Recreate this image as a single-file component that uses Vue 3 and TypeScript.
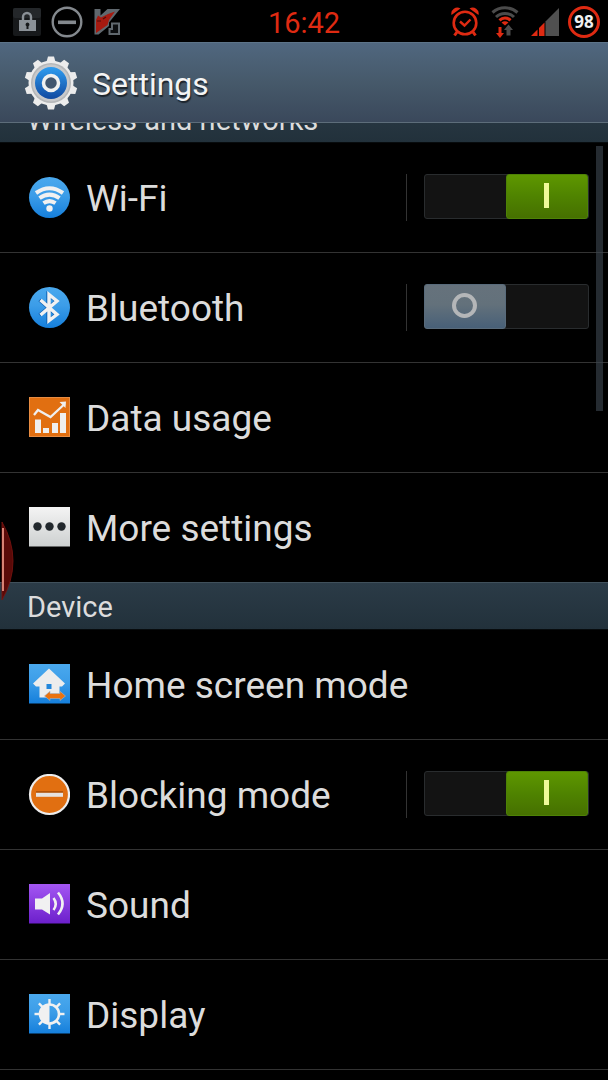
<script setup lang="ts">
import { reactive } from 'vue'

type IconName = 'wifi' | 'bluetooth' | 'data' | 'more' | 'home' | 'blocking' | 'sound' | 'display'

interface Item {
  id: IconName
  label: string
  on?: boolean
}

interface Section {
  title: string
  items: Item[]
}

const sections = reactive<Section[]>([
  {
    title: 'Wireless and networks',
    items: [
      { id: 'wifi', label: 'Wi-Fi', on: true },
      { id: 'bluetooth', label: 'Bluetooth', on: false },
      { id: 'data', label: 'Data usage' },
      { id: 'more', label: 'More settings' },
    ],
  },
  {
    title: 'Device',
    items: [
      { id: 'home', label: 'Home screen mode' },
      { id: 'blocking', label: 'Blocking mode', on: true },
      { id: 'sound', label: 'Sound' },
      { id: 'display', label: 'Display' },
    ],
  },
])

const teeth = Array.from({ length: 10 }, (_, i) => i * 36)
const rays = Array.from({ length: 8 }, (_, i) => i * 45)
</script>

<template>
  <div class="screen">
    <svg class="defs" width="0" height="0" aria-hidden="true">
      <defs>
        <linearGradient id="blue" x1="0" y1="0" x2="0" y2="1">
          <stop offset="0" stop-color="#4aa9ee" />
          <stop offset="0.45" stop-color="#3c9de8" />
          <stop offset="1" stop-color="#157fdc" />
        </linearGradient>
        <linearGradient id="purple" x1="0" y1="0" x2="0" y2="1">
          <stop offset="0" stop-color="#a457f3" />
          <stop offset="1" stop-color="#6c1fcb" />
        </linearGradient>
        <linearGradient id="silver" x1="0" y1="0" x2="0" y2="1">
          <stop offset="0" stop-color="#f4f4f4" />
          <stop offset="1" stop-color="#cdd0d0" />
        </linearGradient>
        <linearGradient id="hub" x1="0" y1="0" x2="0" y2="1">
          <stop offset="0" stop-color="#2f9df0" />
          <stop offset="1" stop-color="#1149a0" />
        </linearGradient>
      </defs>
    </svg>

    <header class="status">
      <div class="status-left">
        <svg width="28" height="28" viewBox="0 0 28 28" aria-hidden="true">
          <rect width="28" height="28" rx="2" fill="#17191b" />
          <rect width="28" height="10" rx="2" fill="#24272a" />
          <path d="M10 13V9a4 4 0 0 1 8 0v4" fill="none" stroke="#8b9197" stroke-width="2.4" />
          <rect x="6" y="12" width="17" height="11" fill="#8b9197" />
          <path d="M14.500 14.500a2 2 0 0 1 1 3.700V21h-2v-2.800a2 2 0 0 1 1-3.700z" fill="#17191b" />
        </svg>
        <svg width="32" height="32" viewBox="0 0 32 32" aria-hidden="true">
          <circle cx="16" cy="16" r="14.300" fill="none" stroke="#84898e" stroke-width="2.400" />
          <rect x="7" y="14.500" width="18" height="3.600" fill="#84898e" />
        </svg>
        <svg width="28" height="28" viewBox="0 0 28 28" aria-hidden="true">
          <path d="M1.500 1H7.500V7.500L14.500 1H27L16 14.500V18L5.500 26.500H1.500z" fill="#60686e" />
          <path d="M3 12L5 7.500L8 9.500L15 6L22 3.500L16 12L14.500 17L8 21.500L3 25z" fill="#a61a10" />
          <path d="M4 13h4M10 11l3-2" stroke="#4d0c08" stroke-width="1.200" />
          <path d="M19 15.500h7V26H16.500v-5h2.500z" fill="#0c0e10" stroke="#60686e" stroke-width="2" />
        </svg>
      </div>
      <time class="clock">16:42</time>
      <div class="status-right">
        <svg class="spaced" width="28" height="30" viewBox="0 0 28 30" aria-hidden="true">
          <g fill="none" stroke="#df2a12">
            <circle cx="14" cy="16" r="11.300" stroke-width="2.600" />
            <path d="M9 14.500l4.500 4 6-6" stroke-width="2.400" />
            <path d="M6 25l-2.500 3.500M22 25l2.500 3.500" stroke-width="3" />
          </g>
          <path d="M0.500 8a6 6 0 0 1 9-6.500zM27.500 8a6 6 0 0 0-9-6.500z" fill="#df2a12" />
        </svg>
        <svg class="spaced" width="28" height="32" viewBox="0 0 28 32" aria-hidden="true">
          <g fill="none" stroke-width="3">
            <path d="M1.500 6.500a19 19 0 0 1 25 0" stroke="#4b4b4b" />
            <path d="M5 11a13 13 0 0 1 18 0" stroke="#4b4b4b" />
            <path d="M8.500 14.300a8 8 0 0 1 11 0" stroke="#df2a12" />
          </g>
          <path d="M10.500 16.500a6 6 0 0 1 7 0L14 19.500z" fill="#df2a12" />
          <path d="M7.500 21h3v6h2.500l-4 5-4-5h2.500z" fill="#df2a12" />
          <path d="M17.500 18.500l4.500 5.500h-2.500V29.500h-4v-5.500H13z" fill="#4b4b4b" />
        </svg>
        <svg width="28" height="28" viewBox="0 0 28 28" aria-hidden="true">
          <path d="M0 28L6.500 21.500V28z" fill="#df2a12" />
          <path d="M8 28V20L13.500 14.500V28z" fill="#df2a12" />
          <path d="M14.500 28V13.500L28 0V28z" fill="#505050" />
        </svg>
        <span class="battery">98</span>
      </div>
    </header>

    <div class="title-bar">
      <svg width="54" height="54" viewBox="0 0 54 54" aria-hidden="true">
        <g fill="#ececec">
          <path v-for="a in teeth" :key="a" d="M22.500 6L24 0.500H30L31.500 6z" :transform="`rotate(${a} 27 27)`" />
          <circle cx="27" cy="27" r="22.500" />
        </g>
        <circle cx="27" cy="27" r="20" fill="#b5b7b9" />
        <circle cx="27" cy="27" r="18.500" fill="#c8c9cb" />
        <circle cx="27" cy="27" r="16" fill="url(#hub)" />
        <circle cx="27" cy="27" r="7.500" fill="#41556e" stroke="#f0f0f0" stroke-width="3.500" />
      </svg>
      <h1>Settings</h1>
    </div>

    <main class="viewport">
      <div class="list">
        <section v-for="s in sections" :key="s.title">
          <h2>{{ s.title }}</h2>
          <ul>
            <li v-for="item in s.items" :key="item.id">
              <a class="entry" href="#">
                <svg class="icon" width="42" height="42" viewBox="0 0 42 42" aria-hidden="true">
                  <template v-if="item.id === 'wifi'">
                    <circle cx="21.500" cy="20.500" r="20.500" fill="url(#blue)" />
                    <g fill="none" stroke="#f1f1f1" stroke-width="4">
                      <path d="M8 16Q21.500 6.500 35 16" />
                      <path d="M11.500 21.200Q21.500 14 31.500 21.200" />
                      <path d="M15.500 26.200Q21.500 22 27.500 26.200" />
                    </g>
                    <circle cx="21.500" cy="31.500" r="3.200" fill="#f1f1f1" />
                  </template>
                  <template v-else-if="item.id === 'bluetooth'">
                    <circle cx="21.500" cy="20.500" r="20.500" fill="url(#blue)" />
                    <path d="M12.500 13L29 27.500L21 33.500V7.500L29 14L12.500 28" fill="none" stroke="#0f62b5" stroke-width="3.400" transform="translate(-1 0)" />
                    <path d="M12.500 13L29 27.500L21 33.500V7.500L29 14L12.500 28" fill="none" stroke="#f1f1f1" stroke-width="3.400" />
                  </template>
                  <template v-else-if="item.id === 'data'">
                    <rect x="1.500" y="0.500" width="40" height="39" fill="#e16f11" stroke="#e88c42" />
                    <path d="M7 22.500h6V36H7zM15 31h6v5h-6zM24 26h6v10h-6zM32 16h6v20h-6z" fill="#efefef" />
                    <path d="M6 18L10 13L22.500 20L35.500 8" fill="none" stroke="#efefef" stroke-width="2.300" />
                    <path d="M31.500 5L38 4.500L37.500 11z" fill="#efefef" />
                  </template>
                  <template v-else-if="item.id === 'more'">
                    <rect x="1" width="41" height="39.500" fill="url(#silver)" />
                    <g fill="#22282d">
                      <circle cx="9.500" cy="19.500" r="4.200" />
                      <circle cx="21.500" cy="19.500" r="4.200" />
                      <circle cx="33.500" cy="19.500" r="4.200" />
                    </g>
                  </template>
                  <template v-else-if="item.id === 'home'">
                    <rect x="1" width="41" height="39.500" fill="url(#blue)" />
                    <path d="M21 4.500L37 19.500L34 22.500H31.500V33.500H11.500V22.500H8L5 19.500z" fill="#ededed" />
                    <rect x="18.500" y="20" width="5" height="5" fill="#2387db" />
                    <path d="M16.500 32L22 27.200V29.500H32V27.200L37.500 32L32 36.500V34.500H22V36.500z" fill="#ea7310" stroke="#a3b4c2" stroke-width="0.600" />
                  </template>
                  <template v-else-if="item.id === 'blocking'">
                    <circle cx="21.500" cy="20.500" r="19.500" fill="#e16f11" stroke="#ededed" stroke-width="2.200" />
                    <rect x="8" y="17.200" width="27" height="1.600" fill="#a94e08" />
                    <rect x="8" y="18.800" width="27" height="4" fill="#e6e2df" />
                  </template>
                  <template v-else-if="item.id === 'sound'">
                    <rect x="1" width="41" height="39.500" fill="url(#purple)" />
                    <path d="M7 14.500H14L22 9V30.500L14 25.500H7z" fill="#f1f1f1" />
                    <path d="M25.500 14Q30 20 25.500 26M30 8.500Q39 19.500 30 30.500" fill="none" stroke="#f1f1f1" stroke-width="2.600" />
                  </template>
                  <template v-else>
                    <rect x="1" width="41" height="39.500" fill="url(#blue)" />
                    <path
                      v-for="a in rays"
                      :key="a"
                      d="M21.500 5V11"
                      stroke="#f1f1f1"
                      stroke-width="2.400"
                      :transform="`rotate(${a} 21.500 20)`"
                    />
                    <circle cx="21.500" cy="20" r="9.500" fill="none" stroke="#f1f1f1" stroke-width="2.600" />
                    <path d="M21.500 10.500a9.500 9.500 0 0 0 0 19z" fill="#f1f1f1" />
                  </template>
                </svg>
                <span :id="`label-${item.id}`" class="name">{{ item.label }}</span>
              </a>
              <span v-if="item.on !== undefined" class="control">
                <input
                  v-model="item.on"
                  class="switch"
                  type="checkbox"
                  role="switch"
                  :aria-labelledby="`label-${item.id}`"
                />
              </span>
            </li>
          </ul>
        </section>
      </div>
      <div class="scrollbar" aria-hidden="true"></div>
    </main>

    <svg class="edge-tab" width="14" height="80" viewBox="0 0 14 80" aria-hidden="true">
      <path d="M2 1Q13 20 13 40Q13 60 2 79z" fill="#5a0a08" stroke="#7d1410" stroke-width="0.800" />
      <rect x="2" y="7" width="2" height="63" fill="#d98274" />
    </svg>
  </div>
</template>

<style>
body {
  margin: 0;
  background: #000;
}
</style>

<style scoped>
.screen {
  position: relative;
  min-height: 100vh;
  background: #000;
  color: #dcdcdc;
  font-family: Roboto, "Noto Sans", sans-serif;
}

.defs {
  position: absolute;
}

svg {
  display: block;
  flex: none;
}

.status {
  display: grid;
  grid-template-columns: 1fr auto 1fr;
  align-items: center;
  height: 42px;
  padding: 0 8px;
}

.status-left,
.status-right {
  display: flex;
  align-items: center;
}

.status-left {
  gap: 10px;
  padding-left: 5px;
}

.status-right {
  justify-content: flex-end;
  gap: 9px;
}

.spaced {
  margin-right: 3px;
}

.clock {
  color: #df2a12;
  font-size: 29px;
  line-height: 42px;
  padding-top: 2px;
}

.battery {
  box-sizing: border-box;
  width: 32px;
  height: 32px;
  border: 3px solid #df2a12;
  border-radius: 50%;
  color: #f0f0f0;
  font: bold 17px/26px "Open Sans", sans-serif;
  text-align: center;
}

.title-bar {
  display: flex;
  align-items: center;
  gap: 14px;
  box-sizing: border-box;
  height: 81px;
  padding: 0 24px;
  border-top: 1px solid #5d7489;
  border-bottom: 1px solid #5d6d7a;
  background: linear-gradient(#50677f, #46596a 50%, #3a485b);
}

h1 {
  margin: 0;
  padding-top: 3px;
  color: #f4f4f4;
  font-size: 32px;
  font-weight: 400;
  line-height: 40px;
  text-shadow: 1px 2px 1px #1c242c;
}

.viewport {
  position: relative;
  overflow: hidden;
}

/* The list is scrolled so that its first heading sits partly under the title bar. */
.list {
  margin-top: -28px;
}

h2 {
  box-sizing: border-box;
  height: 48px;
  margin: 0;
  padding: 0 27px;
  border-top: 1px solid #40505b;
  border-bottom: 1px solid #070b0d;
  background: linear-gradient(#2b3b47, #22313b);
  color: #dcdcdc;
  font-size: 29px;
  font-weight: 400;
  line-height: 48px;
}

ul {
  margin: 0;
  padding: 0;
  list-style: none;
}

li {
  display: flex;
  align-items: center;
  height: 109px;
  padding-right: 19px;
  border-bottom: 1px solid #333;
}

section:first-child li:last-child {
  border-bottom: 0;
}

.entry {
  display: flex;
  flex: 1;
  align-items: center;
  gap: 16px;
  height: 100%;
  padding-left: 28px;
  color: inherit;
  text-decoration: none;
}

.name {
  padding-top: 3px;
  font-size: 37px;
  line-height: 48px;
  white-space: nowrap;
}

.control {
  display: flex;
  align-items: flex-start;
  height: 47px;
  padding-left: 17px;
  border-left: 1px solid #333;
}

.switch {
  position: relative;
  box-sizing: border-box;
  width: 165px;
  height: 45px;
  margin: 0;
  appearance: none;
  border: 1px solid #292c2e;
  border-radius: 3px;
  background: #131313;
}

.switch::before {
  position: absolute;
  top: -1px;
  left: -1px;
  box-sizing: border-box;
  width: 82px;
  height: 45px;
  border: 1px solid #596b7b;
  border-radius: 3px;
  background: linear-gradient(#66727c, #63717b 45%, #486078);
  content: "";
}

.switch:checked::before {
  right: 0;
  left: auto;
  border-color: #4e8206;
  background: linear-gradient(#5e9700, #4f8300 50%, #467000);
}

.switch::after {
  position: absolute;
  top: 8px;
  left: 27px;
  box-sizing: border-box;
  width: 25px;
  height: 25px;
  border: 4px solid #b4b6b8;
  border-radius: 50%;
  content: "";
}

.switch:checked::after {
  right: 39px;
  left: auto;
  width: 5px;
  border: 0;
  border-radius: 0;
  background: #effa9a;
}

.scrollbar {
  position: absolute;
  top: 23px;
  right: 5px;
  width: 7px;
  height: 265px;
  background: rgb(62 72 82 / 60%);
}

.edge-tab {
  position: absolute;
  top: 521px;
  left: 0;
}
</style>
